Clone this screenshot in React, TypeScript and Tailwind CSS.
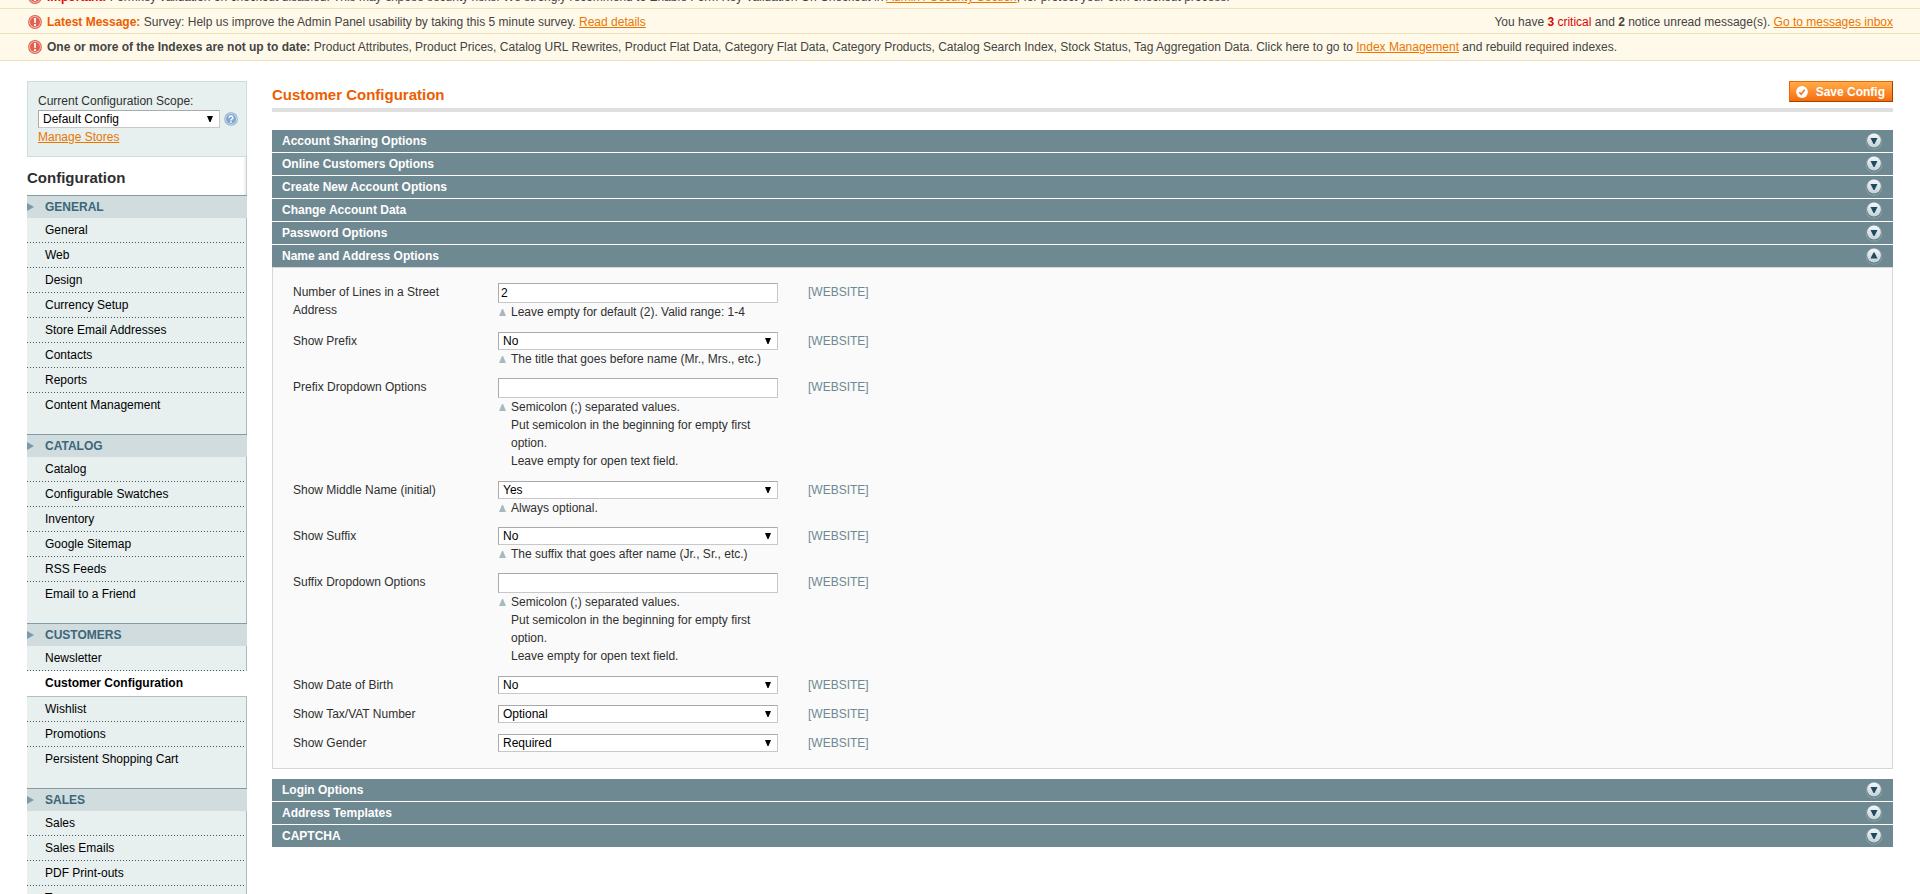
import type { ReactNode } from "react";

type MenuSection = { title: string; items: string[] };

type Field = {
  id: string;
  label: string;
  kind: "text" | "select";
  value: string;
  options?: string[];
  notes?: string[];
};

const menu: MenuSection[] = [
  {
    title: "General",
    items: ["General", "Web", "Design", "Currency Setup", "Store Email Addresses", "Contacts", "Reports", "Content Management"],
  },
  {
    title: "Catalog",
    items: ["Catalog", "Configurable Swatches", "Inventory", "Google Sitemap", "RSS Feeds", "Email to a Friend"],
  },
  {
    title: "Customers",
    items: ["Newsletter", "Customer Configuration", "Wishlist", "Promotions", "Persistent Shopping Cart"],
  },
  { title: "Sales", items: ["Sales", "Sales Emails", "PDF Print-outs", "Tax"] },
];

const activeItem = "Customer Configuration";

const dropdownNotes = [
  "Semicolon (;) separated values.",
  "Put semicolon in the beginning for empty first option.",
  "Leave empty for open text field.",
];

const requirement = ["No", "Optional", "Required"];

const fields: Field[] = [
  { id: "street_lines", label: "Number of Lines in a Street Address", kind: "text", value: "2", notes: ["Leave empty for default (2). Valid range: 1-4"] },
  { id: "prefix_show", label: "Show Prefix", kind: "select", value: "No", options: requirement, notes: ["The title that goes before name (Mr., Mrs., etc.)"] },
  { id: "prefix_options", label: "Prefix Dropdown Options", kind: "text", value: "", notes: dropdownNotes },
  { id: "middlename_show", label: "Show Middle Name (initial)", kind: "select", value: "Yes", options: ["Yes", "No"], notes: ["Always optional."] },
  { id: "suffix_show", label: "Show Suffix", kind: "select", value: "No", options: requirement, notes: ["The suffix that goes after name (Jr., Sr., etc.)"] },
  { id: "suffix_options", label: "Suffix Dropdown Options", kind: "text", value: "", notes: dropdownNotes },
  { id: "dob_show", label: "Show Date of Birth", kind: "select", value: "No", options: requirement },
  { id: "taxvat_show", label: "Show Tax/VAT Number", kind: "select", value: "Optional", options: requirement },
  { id: "gender_show", label: "Show Gender", kind: "select", value: "Required", options: requirement },
];

const sectionsBefore = [
  "Account Sharing Options",
  "Online Customers Options",
  "Create New Account Options",
  "Change Account Data",
  "Password Options",
];
const sectionsAfter = ["Login Options", "Address Templates", "CAPTCHA"];

function ErrorIcon() {
  return (
    <svg viewBox="0 0 14 14" className="size-[14px] shrink-0" aria-hidden="true">
      <circle cx="7" cy="7" r="6.9" fill="#d9604f" />
      <circle cx="7" cy="7" r="5.9" fill="#f3bdb3" />
      <circle cx="7" cy="7" r="5" fill="#e2604f" />
      <path d="M6 3h2l-.3 5H6.300z" fill="#fff" />
      <rect x="6" y="9" width="2" height="2" rx=".5" fill="#fff" />
    </svg>
  );
}

function HelpIcon() {
  return (
    <svg viewBox="0 0 14 14" className="size-[14px] shrink-0" aria-hidden="true">
      <circle cx="7" cy="7" r="6.8" fill="#8fb0d3" />
      <circle cx="7" cy="7" r="5.800" fill="#d5e2f0" />
      <circle cx="7" cy="7" r="5" fill="#83a7d0" />
      <path d="M5.100 5.700a1.900 1.700 0 1 1 2.700 1.500q-.8.400-.8 1.200" fill="none" stroke="#fff" strokeWidth="1.400" />
      <rect x="6.200" y="9.300" width="1.600" height="1.500" fill="#fff" />
    </svg>
  );
}

function CheckIcon() {
  return (
    <svg viewBox="0 0 12 12" className="size-3 shrink-0" aria-hidden="true">
      <circle cx="6" cy="6" r="5.900" fill="#fff" />
      <path d="M3.300 6.300l1.900 1.900 3.500-4.400" fill="none" stroke="#f0792a" strokeWidth="1.700" />
    </svg>
  );
}

function ToggleIcon({ open }: { open: boolean }) {
  return (
    <svg viewBox="0 0 18 18" className="size-[18px] shrink-0" aria-hidden="true">
      <defs>
        <linearGradient id={open ? "knob-open" : "knob-closed"} x1="0" y1="0" x2="0" y2="1">
          <stop offset="0" stopColor="#f3f6f8" />
          <stop offset="1" stopColor="#c3d2d8" />
        </linearGradient>
      </defs>
      <circle cx="9" cy="9.500" r="8.300" fill="#8ba1a9" />
      <circle cx="9" cy="9.200" r="7.400" fill="#5f7a84" />
      <circle cx="9" cy="8.500" r="6.900" fill={open ? "url(#knob-open)" : "url(#knob-closed)"} />
      {open ? <path d="M5.500 11.500L8.500 5.500h1l3 6z" fill="#1d4a5c" /> : <path d="M5.500 6h7l-3 6h-1z" fill="#1d4a5c" />}
    </svg>
  );
}

function TextLink({ children }: { children: ReactNode }) {
  return (
    <a href="#" className="text-[#ea7601] underline">
      {children}
    </a>
  );
}

function SelectBox({ id, value, options, className }: { id: string; value: string; options: string[]; className: string }) {
  return (
    <div className={className}>
      <select
        id={id}
        defaultValue={value}
        className="col-start-1 row-start-1 h-[18px] w-full appearance-none border border-[#aaa] border-r-[#c8c8c8] border-b-[#c8c8c8] bg-white pr-5 pl-1 text-xs leading-4 text-black"
      >
        {options.map((option) => (
          <option key={option}>{option}</option>
        ))}
      </select>
      <svg viewBox="0 0 6 6" className="pointer-events-none col-start-1 row-start-1 mr-[7px] size-[6px] self-center justify-self-end" aria-hidden="true">
        <path d="M0 0h6L3.500 6h-1z" fill="#000" />
      </svg>
    </div>
  );
}

function SectionHeader({ title, open = false }: { title: string; open?: boolean }) {
  return (
    <button
      type="button"
      aria-expanded={open}
      className="flex h-[22px] w-full items-center justify-between bg-[#6f8992] px-[10px] text-left text-xs font-bold text-white"
    >
      {title}
      <ToggleIcon open={open} />
    </button>
  );
}

function FieldRow({ field }: { field: Field }) {
  const compact = field.kind === "select" && field.notes !== undefined;
  return (
    <tr className="align-top">
      <td className={compact ? "w-[205px] pt-[5px] pb-[5px]" : "w-[205px] pt-[5px] pb-[6px]"}>
        <label htmlFor={field.id} className="block w-[180px] leading-[18px]">
          {field.label}
        </label>
      </td>
      <td className={compact ? "w-[280px] pt-[5px] pb-[5px]" : "w-[280px] pt-[5px] pb-[6px]"}>
        {field.kind === "text" ? (
          <input
            id={field.id}
            type="text"
            defaultValue={field.value}
            className="block h-5 w-full border border-[#aaa] border-r-[#c8c8c8] border-b-[#c8c8c8] bg-white px-[2px] text-xs text-black"
          />
        ) : (
          <SelectBox id={field.id} value={field.value} options={field.options ?? []} className="grid w-full" />
        )}
        {field.notes && (
          <div className="flex items-start leading-[18px]">
            <svg viewBox="0 0 7 7" className="mt-[6px] mr-[5px] ml-px size-[7px] shrink-0" aria-hidden="true">
              <path d="M0 7L3 0h1l3 7z" fill="#a7b9bf" />
            </svg>
            <div>
              {field.notes.map((note) => (
                <p key={note}>{note}</p>
              ))}
            </div>
          </div>
        )}
      </td>
      <td className="pt-[5px] pl-[30px] leading-[18px] text-[#6f8992]">[WEBSITE]</td>
    </tr>
  );
}

function Menu() {
  return (
    <nav className="bg-[#e7efef]">
      {menu.map((section) => (
        <section key={section.title}>
          <h4 className="flex h-[23px] items-center border-t border-[#849ba3] bg-[#d0dcde] font-bold text-[#3c6679] uppercase">
            <svg viewBox="0 0 7 8" className="mr-[11px] h-2 w-[7px]" aria-hidden="true">
              <path d="M0 0l7 4-7 4z" fill="#7a9ba6" />
            </svg>
            {section.title}
          </h4>
          <ul className="border-r border-[#a9bcc0]">
            {section.items.map((item, index) => {
              const last = index === section.items.length - 1;
              const style =
                item === activeItem
                  ? "block h-[26px] border-b border-[#b5bdbf] bg-white pl-[18px] leading-[25px] font-bold text-black -mr-px"
                  : last
                    ? "block h-[41px] pl-[18px] leading-[25px] text-black"
                    : "block h-[25px] bg-[linear-gradient(to_right,#4b5558_1px,transparent_1px)] bg-[length:3px_1px] bg-bottom-left bg-repeat-x pl-[18px] leading-[25px] text-black";
              return (
                <li key={item}>
                  <a href="#" className={style}>
                    {item}
                  </a>
                </li>
              );
            })}
          </ul>
        </section>
      ))}
    </nav>
  );
}

export default function App() {
  return (
    <div className="h-screen overflow-hidden bg-white font-['Liberation_Sans',Arial,sans-serif] text-xs leading-[18px] text-[#2f2f2f]">
      <div className="bg-[#fff9e9] text-[#444]">
        <div className="flex h-[9px] items-end overflow-hidden border-b border-[#eee2be] px-7">
          <div className="flex h-[22px] shrink-0 items-center gap-[5px]">
            <ErrorIcon />
            <p className="whitespace-nowrap">
              <strong className="text-[#f00000]">Important:</strong> Formkey validation on checkout disabled. This may expose security risks. We
              strongly recommend to Enable Form Key Validation On Checkout in <TextLink>Admin / Security Section</TextLink>, for protect your own
              checkout process.
            </p>
          </div>
        </div>
        <div className="flex h-[25px] items-center gap-[5px] border-b border-[#eee2be] pt-px pr-[27px] pl-7">
          <ErrorIcon />
          <p className="flex-1">
            <strong className="text-[#eb5e00]">Latest Message:</strong> Survey: Help us improve the Admin Panel usability by taking this 5 minute
            survey. <TextLink>Read details</TextLink>
          </p>
          <p>
            You have{" "}
            <span className="text-[#d40707]">
              <strong>3</strong> critical
            </span>{" "}
            and <strong>2</strong> notice unread message(s). <TextLink>Go to messages inbox</TextLink>
          </p>
        </div>
        <div className="flex h-[27px] items-center gap-[5px] border-b border-[#eee2be] pr-[27px] pl-7">
          <ErrorIcon />
          <p>
            <strong>One or more of the Indexes are not up to date:</strong> Product Attributes, Product Prices, Catalog URL Rewrites, Product Flat
            Data, Category Flat Data, Category Products, Catalog Search Index, Stock Status, Tag Aggregation Data. Click here to go to{" "}
            <TextLink>Index Management</TextLink> and rebuild required indexes.
          </p>
        </div>
      </div>

      <div className="flex items-start gap-[25px] px-[27px] pt-5">
        <aside className="w-[220px] shrink-0">
          <div className="border border-[#cddddd] bg-[#e7efef] py-[10px] pr-2 pl-[10px]">
            <label htmlFor="scope" className="block">
              Current Configuration Scope:
            </label>
            <div className="flex items-center gap-1">
              <SelectBox id="scope" value="Default Config" options={["Default Config", "Main Website"]} className="grid w-[182px] shrink-0" />
              <HelpIcon />
            </div>
            <TextLink>Manage Stores</TextLink>
          </div>
          <h3 className="h-[38px] border-r border-[#c9cfd0] bg-linear-to-l from-[#ececec] to-white to-[3px] text-[15px] leading-[42px] font-bold">
            Configuration
          </h3>
          <Menu />
        </aside>

        <main className="min-w-0 flex-1">
          <div className="mb-[18px] flex h-[31px] items-start justify-between border-b-4 border-[#dfdfdf]">
            <h1 className="text-[15px] leading-7 font-bold text-[#eb5e00]">Customer Configuration</h1>
            <button
              type="button"
              className="flex h-[21px] items-center gap-2 border border-[#ed6502] border-r-[#a04300] border-b-[#a04300] bg-linear-to-b from-[#ffac47] to-[#f76b07] pr-[7px] pl-[6px] text-xs leading-4 font-bold text-white"
            >
              <CheckIcon />
              Save Config
            </button>
          </div>

          <div className="flex flex-col gap-px">
            {sectionsBefore.map((title) => (
              <SectionHeader key={title} title={title} />
            ))}
            <SectionHeader title="Name and Address Options" open />
          </div>
          <div className="mb-[10px] border border-[#d6d6d6] bg-[#fafafa] px-5 py-[10px]">
            <table>
              <tbody>
                {fields.map((field) => (
                  <FieldRow key={field.id} field={field} />
                ))}
              </tbody>
            </table>
          </div>
          <div className="flex flex-col gap-px">
            {sectionsAfter.map((title) => (
              <SectionHeader key={title} title={title} />
            ))}
          </div>
        </main>
      </div>
    </div>
  );
}
